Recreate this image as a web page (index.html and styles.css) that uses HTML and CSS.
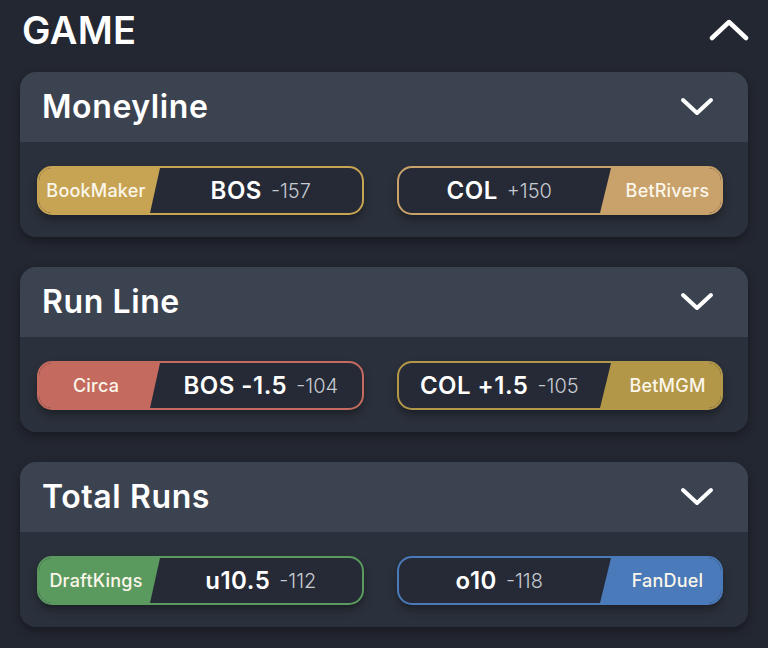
FILE: index.html
```html
<!DOCTYPE html>
<html>
<head>
<meta charset="utf-8">
<link rel="stylesheet" href="styles.css">
</head>
<body>
<div class="page">
  <div class="top">
    <h1 class="title">GAME</h1>
    <svg class="up" width="40" height="24" viewBox="0 0 40 24"><path d="M3 21 L20 5 L37 21" fill="none" stroke="#fff" stroke-width="4.5" stroke-linecap="round" stroke-linejoin="round"/></svg>
  </div>

  <section class="card">
    <div class="card-head">
      <h2>Moneyline</h2>
      <svg class="down" width="34" height="20" viewBox="0 0 34 20"><path d="M3 3 L17 16 L31 3" fill="none" stroke="#fff" stroke-width="4" stroke-linecap="round" stroke-linejoin="round"/></svg>
    </div>
    <div class="card-body">
      <div class="pill gold">
        <span class="book left">BookMaker</span>
        <span class="bet"><b>BOS</b><i>-157</i></span>
      </div>
      <div class="pill tan">
        <span class="bet"><b>COL</b><i>+150</i></span>
        <span class="book right">BetRivers</span>
      </div>
    </div>
  </section>

  <section class="card">
    <div class="card-head">
      <h2>Run Line</h2>
      <svg class="down" width="34" height="20" viewBox="0 0 34 20"><path d="M3 3 L17 16 L31 3" fill="none" stroke="#fff" stroke-width="4" stroke-linecap="round" stroke-linejoin="round"/></svg>
    </div>
    <div class="card-body">
      <div class="pill red">
        <span class="book left">Circa</span>
        <span class="bet"><b>BOS -1.5</b><i>-104</i></span>
      </div>
      <div class="pill mgm">
        <span class="bet"><b>COL +1.5</b><i>-105</i></span>
        <span class="book right">BetMGM</span>
      </div>
    </div>
  </section>

  <section class="card">
    <div class="card-head">
      <h2>Total Runs</h2>
      <svg class="down" width="34" height="20" viewBox="0 0 34 20"><path d="M3 3 L17 16 L31 3" fill="none" stroke="#fff" stroke-width="4" stroke-linecap="round" stroke-linejoin="round"/></svg>
    </div>
    <div class="card-body">
      <div class="pill green">
        <span class="book left">DraftKings</span>
        <span class="bet"><b>u10.5</b><i>-112</i></span>
      </div>
      <div class="pill blue">
        <span class="bet"><b>o10</b><i>-118</i></span>
        <span class="book right">FanDuel</span>
      </div>
    </div>
  </section>
</div>
</body>
</html>
```

FILE: styles.css
```css
* { box-sizing: border-box; }
html, body { margin: 0; padding: 0; }
body {
  background: #232731;
  font-family: Inter, "Noto Sans", sans-serif;
  color: #fff;
  width: 768px;
  height: 648px;
  overflow: hidden;
}
.page {
  padding: 8px 20px 0 20px;
  display: flex;
  flex-direction: column;
  gap: 30px;
}
.top {
  display: flex;
  justify-content: space-between;
  align-items: center;
  height: 40px;
  margin-bottom: -6px;
}
.title {
  margin: 4px 0 0 2px;
  font-size: 38px;
  font-weight: 600;
  letter-spacing: 0.3px;
  line-height: 40px;
}
.up { margin-right: -1px; margin-top: 2px; }
.card {
  border-radius: 16px;
  overflow: hidden;
  box-shadow: 0 4px 10px rgba(0,0,0,0.35);
}
.card-head {
  background: #3b4351;
  height: 70px;
  display: flex;
  align-items: center;
  justify-content: space-between;
  padding: 0 34px 0 22px;
}
.card-head h2 {
  margin: 0 0 2px 0;
  font-size: 32px;
  font-weight: 600;
  letter-spacing: 0.6px;
}
.card-body {
  background: #2b313c;
  height: 95px;
  padding: 24px 25px 0 17px;
  display: flex;
  gap: 33px;
}
.pill {
  flex: 1;
  height: 49px;
  border: 2px solid;
  border-radius: 15px;
  overflow: hidden;
  display: flex;
  background: #252a36;
  box-shadow: 0 5px 8px rgba(0,0,0,0.35);
}
.book {
  flex: none;
  width: 121px;
  display: flex;
  align-items: center;
  font-size: 18px;
  font-weight: 500;
  letter-spacing: 0.2px;
  color: #fbf6ea;
}
.book.left {
  clip-path: polygon(0 0, 100% 0, calc(100% - 10px) 100%, 0 100%);
  padding-left: 2px;
  padding-right: 9px;
  justify-content: center;
}
.book.right {
  clip-path: polygon(11px 0, 100% 0, 100% 100%, 0 100%);
  padding-left: 14px;
  justify-content: center;
}
.bet {
  flex: 1;
  display: flex;
  align-items: center;
  justify-content: center;
  gap: 9px;
}
.bet b {
  font-size: 24px;
  font-weight: 600;
  letter-spacing: 0.5px;
  white-space: pre;
}
.bet i {
  font-style: normal;
  font-size: 20px;
  font-weight: 300;
  color: #c7cad1;
}
.gold { border-color: #c7a453; }
.gold .book { background: #c7a453; }
.tan { border-color: #c9a16a; }
.tan .book { background: #c9a16a; }
.red { border-color: #c46a5e; }
.red .book { background: #c46a5e; }
.mgm { border-color: #b39748; }
.mgm .book { background: #b39748; }
.green { border-color: #5b9a5f; }
.green .book { background: #5b9a5f; }
.blue { border-color: #4a7ab9; }
.blue .book { background: #4a7ab9; }
```
